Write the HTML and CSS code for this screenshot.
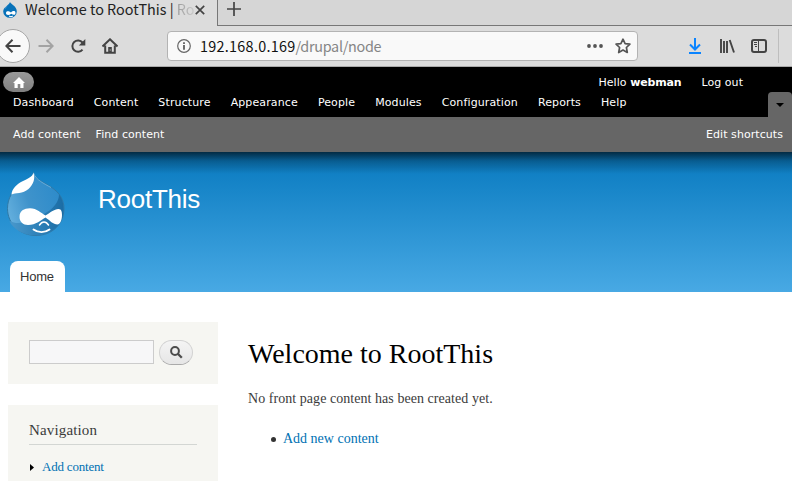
FILE: index.html
```html
<!DOCTYPE html>
<html lang="en">
<head>
<meta charset="utf-8">
<title>Welcome to RootThis | RootThis</title>
<link rel="stylesheet" href="styles.css">
</head>
<body>
<div class="tabs">
  <div class="tab">
    <svg class="favicon" width="16" height="16" viewBox="0 0 16 16"><path d="M8 0C8.500 2 14.800 4 14.800 9.500A6.800 6.300 0 0 1 1.200 9.500C1.200 5 7 3.500 8 0Z" fill="#0872b9"/><path d="M7 2C6 4 3.500 4.500 2.500 7.500Z" fill="#8fc9ee"/><path d="M4 11C4 8.500 7 9 9 10.500C11 8.500 13.500 8.500 13.500 11C13.500 13.500 11 13 9.300 11.800C7 13.500 4 13.500 4 11Z" fill="#fff"/><path d="M7 14.200Q9 15.200 11 14.100" fill="none" stroke="#fff"/></svg>
    <span class="tab-title">Welcome to RootThis | <span class="fade">Ro</span></span>
    <svg class="close" width="10" height="10" viewBox="0 0 10 10"><path d="M.8.8 9.200 9.200M9.200.8.8 9.200" stroke="#444" stroke-width="1.700"/></svg>
  </div>
  <div class="tab-rest"><svg width="14" height="14" viewBox="0 0 14 14"><path d="M7 0V14M0 7H14" stroke="#444" stroke-width="1.700"/></svg></div>
</div>
<div class="toolbar">
  <div class="back"><svg width="16" height="14" viewBox="0 0 16 14"><path d="M7.500.8 1.300 7 7.500 13.200M1.300 7H15.500" fill="none" stroke="#444" stroke-width="2"/></svg></div>
  <svg class="forward" width="16" height="14" viewBox="0 0 16 14"><path d="M8.500.8 14.700 7 8.500 13.200M14.700 7H.5" fill="none" stroke="#a3a3a3" stroke-width="2"/></svg>
  <svg class="reload" width="16" height="16" viewBox="0 0 16 16"><path d="M12.500 11.700A5.700 5.700 0 1 1 12.500 4.500" fill="none" stroke="#444" stroke-width="2"/><path d="M15.300 1V7.500H8.800Z" fill="#444"/></svg>
  <svg class="home-icon" width="16" height="16" viewBox="0 0 16 16"><path d="M.5 8.500 8 1.300 15.500 8.500M3.200 7.500V14.800H12.800V7.500" fill="none" stroke="#444" stroke-width="2"/><path d="M6.200 15V9H9.800V15Z" fill="#444"/><path d="M7.700 11.500h1v1h-1z" fill="#ddd"/></svg>
  <div class="urlbar">
    <svg width="14" height="14" viewBox="0 0 14 14"><circle cx="7" cy="7" r="6.300" fill="none" stroke="#666" stroke-width="1.200"/><path d="M7 6V10.800M7 3.200V4.900" stroke="#555" stroke-width="1.700"/></svg>
    <span class="url">192.168.0.169<span class="path">/drupal/node</span></span>
    <svg class="dots" width="16" height="4" viewBox="0 0 16 4"><g fill="#555"><circle cx="2" cy="2" r="1.900"/><circle cx="8" cy="2" r="1.900"/><circle cx="14" cy="2" r="1.900"/></g></svg>
    <svg class="star" width="16" height="16" viewBox="0 0 16 16"><path d="M8 1.200 10.100 5.600 14.900 6.200 11.400 9.500 12.300 14.500 8 12.100 3.700 14.500 4.600 9.500 1.100 6.200 5.900 5.600Z" fill="none" stroke="#555" stroke-width="1.700" stroke-linejoin="round"/></svg>
  </div>
  <div class="tools">
    <svg width="14" height="16" viewBox="0 0 14 16"><path d="M7 0V11.500M2 6.500 7 11.500 12 6.500M1 15H13" fill="none" stroke="#0a84ff" stroke-width="2"/></svg>
    <svg width="16" height="16" viewBox="0 0 16 16"><path d="M2 1V15M5 3V15M8 3V15M10.700 2 15 14.500" fill="none" stroke="#444" stroke-width="1.900"/></svg>
    <svg width="16" height="14" viewBox="0 0 16 14"><rect x="1" y="1" width="14" height="12" rx="2" fill="none" stroke="#444" stroke-width="2"/><path d="M7.500 1V13M3 3.500H6M3 5.500H6M4 7.500H6" stroke="#444"/></svg>
  </div>
</div>
<div class="admin">
  <div class="admin-top">
    <div class="admin-home"><svg width="12" height="11" viewBox="0 0 12 11"><path d="M6 0 12 6H10.500V11H7.300V7H4.700V11H1.500V6H0Z" fill="#fff"/></svg></div>
    <div class="user"><span>Hello <b>webman</b></span><span>Log out</span></div>
  </div>
  <nav class="menu"><span>Dashboard</span><span>Content</span><span>Structure</span><span>Appearance</span><span>People</span><span>Modules</span><span>Configuration</span><span>Reports</span><span>Help</span><i class="toggle"></i></nav>
</div>
<div class="shortcuts"><span>Add content</span><span>Find content</span><span class="edit">Edit shortcuts</span></div>
<header class="header">
  <div class="brand">
    <svg width="58" height="66" viewBox="0 0 58 66">
      <defs>
        <linearGradient id="drop" x1="0" y1=".7" x2="1" y2=".3"><stop offset="0" stop-color="#65b0de"/><stop offset=".4" stop-color="#3f93cb"/><stop offset="1" stop-color="#2b8aca"/></linearGradient>
        <linearGradient id="shade" x1="0" y1="0" x2="1" y2="0"><stop offset="0" stop-color="#4a98cb"/><stop offset=".55" stop-color="#2c80b8"/><stop offset="1" stop-color="#1b6ca4"/></linearGradient>
      </defs>
      <path d="M26.500.5C27.500 7 36 10 44 15C53 21 57 28 57 36.500C57 52 45 63.500 29 63.500C13 63.500 .5 52 .5 36.500C.5 26 6 18 13 12.500C19 8.500 25 7 26.500.5Z" fill="url(#drop)" stroke="#2f79a7" stroke-width="1"/>
      <path d="M52 22C55.500 27 56.700 32 56.700 37C56.700 52 45 63.300 29 63.300C16 63.300 6 57 2.500 49C9 52 16 52 25 47C40 42 52 34 52 22Z" fill="url(#shade)"/>
      <path d="M4.500 22.500C5 16.500 10 12 15 9.500C21 6.500 25.500 5 26.500 .5C28.500 6 26.500 12.500 21.500 17C16 22 8 20.500 4.500 22.500Z" fill="#fff"/>
      <path d="M26.500 1C29 8 37 11.500 44 15.500" fill="none" stroke="#8bc5e9" stroke-width=".6"/>
      <path d="M12.500 45C12.500 39 17 36.300 23 36.300C30 36.500 34 41 38.500 43.500C43 41 47 37 51.500 37C54.500 37 55 40 55 43C55 48 53 52.500 50.500 52.500C46 52.500 43 48.500 38.500 45.500C34 48 29 53 21 53C16 53 12.500 49.500 12.500 45Z" fill="#fff"/>
      <path d="M32.500 53C35 49 39 49 41.500 53" fill="none" stroke="#fff" stroke-width="1.500" stroke-linecap="round"/>
      <path d="M26.500 57.500C31 61 38 61 42.500 57.500" fill="none" stroke="#fff" stroke-width="1.900" stroke-linecap="round"/>
    </svg>
    <span class="site">RootThis</span>
  </div>
  <div class="home-tab">Home</div>
</header>
<main class="page">
  <aside class="side">
    <div class="block search">
      <input class="field" type="text" aria-label="Search">
      <button class="go" aria-label="Go"><svg width="13" height="13" viewBox="0 0 13 13"><circle cx="5" cy="5" r="3.900" fill="none" stroke="#4c4c4c" stroke-width="2"/><path d="M7.800 7.800 11.800 11.800" stroke="#4c4c4c" stroke-width="2.300"/></svg></button>
    </div>
    <div class="block nav">
      <h2>Navigation</h2>
      <div class="nav-item"><svg width="4" height="7" viewBox="0 0 4 7"><path d="M0 0 4 3.500 0 7Z"/></svg><a>Add content</a></div>
    </div>
  </aside>
  <section class="content">
    <h1>Welcome to RootThis</h1>
    <p>No front page content has been created yet.</p>
    <div class="item"><i class="bullet"></i><a>Add new content</a></div>
  </section>
</main>
</body>
</html>
```
FILE: styles.css
```css
* { box-sizing: border-box; }
body { margin: 0; width: 792px; height: 481px; overflow: hidden; background: #fff; color: #3b3b3b; font-family: "Liberation Serif", serif; }
svg { display: block; flex: none; }
h1, h2, p { margin: 0; font-weight: normal; }

.tabs { display: flex; height: 26px; background: #dcdcdc; font-family: "Noto Sans CJK SC", sans-serif; }
.tab { display: flex; width: 217px; padding-left: 2px; align-items: flex-start; }
.favicon { margin-top: 2px; }
.tab-title { width: 166px; margin-left: 7px; white-space: nowrap; font-size: 14.400px; line-height: 18px; color: #222; }
.fade { background: linear-gradient(90deg, #999, #ccc); background-clip: text; color: transparent; }
.close { margin: 5px 0 0 4px; }
.tab-rest { flex: 1; padding: 2px 0 0 9px; background: #d6d6d6; border-left: 1px solid #777; border-bottom: 1px solid #777; }

.toolbar { display: flex; align-items: center; height: 41px; background: #dcdcdc; border-bottom: 1px solid #aaa; }
.back { display: flex; align-items: center; justify-content: center; width: 34px; height: 34px; margin-left: -4px; padding-right: 0; border: 1px solid #a5a5a5; border-radius: 50%; background: #f9f9f9; }
.forward { margin-left: 8px; }
.reload { margin-left: 16px; }
.home-icon { margin-left: 16px; }
.urlbar { display: flex; align-items: center; width: 471px; height: 30px; margin-left: 49px; padding: 0 6px 0 9px; background: #f9f9f9; border: 1px solid #b3b3b3; border-radius: 4px; font-family: "Noto Sans CJK SC", sans-serif; }
.url { flex: 1; margin-left: 9px; font-size: 14.400px; line-height: 20px; letter-spacing: .28px; color: #111; }
.path { letter-spacing: -.3px; color: #858585; }
.star { margin-left: 12px; }
.tools { display: flex; align-items: center; gap: 16.500px; height: 34px; margin-left: 50px; padding-right: 11px; border-right: 1px solid #bebebe; }

.admin, .shortcuts { font-family: "DejaVu Sans", sans-serif; font-size: 11px; line-height: 14px; letter-spacing: .12px; color: #fff; white-space: nowrap; }
.admin { height: 50px; background: #000; }
.admin-top { display: flex; justify-content: space-between; height: 25px; padding: 5px 49px 0 3px; }
.admin-home { display: flex; align-items: center; justify-content: center; width: 31px; height: 20px; border-radius: 10px; background: linear-gradient(#999, #808080); }
.user { display: flex; gap: 20px; padding-top: 4px; letter-spacing: .05px; }
.user b { letter-spacing: -.15px; }
.menu { display: flex; gap: 20px; height: 25px; padding: 0 0 0 13px; }
.menu span { padding-top: 4px; }
.toggle { display: flex; align-items: center; justify-content: center; width: 24px; margin-left: auto; border-radius: 4px 4px 0 0; background: #666; }
.toggle::before { content: ""; border: 4px solid transparent; border-top-color: #000; border-bottom: 0; }
.shortcuts { display: flex; gap: 15px; height: 35px; padding: 11px 9px 0 13px; background: #666; letter-spacing: .06px; }
.edit { margin-left: auto; }

.header { display: flex; flex-direction: column; justify-content: space-between; height: 140px; padding: 20px 0 0 7px; background: linear-gradient(rgba(0,0,0,.65), rgba(0,0,0,.25) 9px, transparent 22px), linear-gradient(#0779bf, #48a9e4); }
.brand { display: flex; }
.site { margin: 12px 0 0 33px; font: 26px/30px "Liberation Sans", sans-serif; letter-spacing: -.25px; color: #fff; }
.home-tab { width: 55px; height: 31px; margin-left: 3px; padding-left: 10px; border-radius: 8px 8px 0 0; background: #fff; font: 13px/31px "Liberation Sans", sans-serif; letter-spacing: -.2px; color: #333; }

.page { display: flex; padding: 30px 0 0 8px; }
.side { display: flex; flex-direction: column; gap: 21px; width: 210px; }
.block { padding: 0 21px; background: #f6f6f2; border: 0; }
.search { display: flex; align-items: flex-start; height: 62px; padding-top: 18px; }
.field { width: 125px; height: 24px; padding: 0; border: 1px solid #ccc; border-radius: 0; background: #f7f7f8; }
.go { display: flex; align-items: center; justify-content: center; width: 34px; height: 25px; margin-left: 5px; padding: 0; border: 1px solid #d2d2d2; border-bottom-color: #aaa; border-radius: 13px; background: linear-gradient(#f4f4f4, #e6e6e6); }
.nav { height: 90px; padding-top: 15px; }
h2 { height: 25px; border-bottom: 1px solid #d3d6d3; font-size: 15px; line-height: 20px; letter-spacing: .15px; }
a { color: #0071b3; }
.nav-item { display: flex; align-items: center; gap: 9px; margin-top: 14px; font-size: 13px; line-height: 16px; letter-spacing: -.2px; }
.nav-item svg { margin-left: 1px; margin-right: -1px; }
.content { padding: 14px 0 0 30px; }
h1 { font-size: 28px; line-height: 36px; color: #000; }
p { margin-top: 17px; font-size: 14px; line-height: 20px; letter-spacing: .05px; }
.item { display: flex; align-items: center; margin: 20px 0 0 23px; font-size: 14px; line-height: 20px; }
.bullet { width: 5px; height: 5px; margin-right: 7px; border-radius: 50%; background: #333; }
```
